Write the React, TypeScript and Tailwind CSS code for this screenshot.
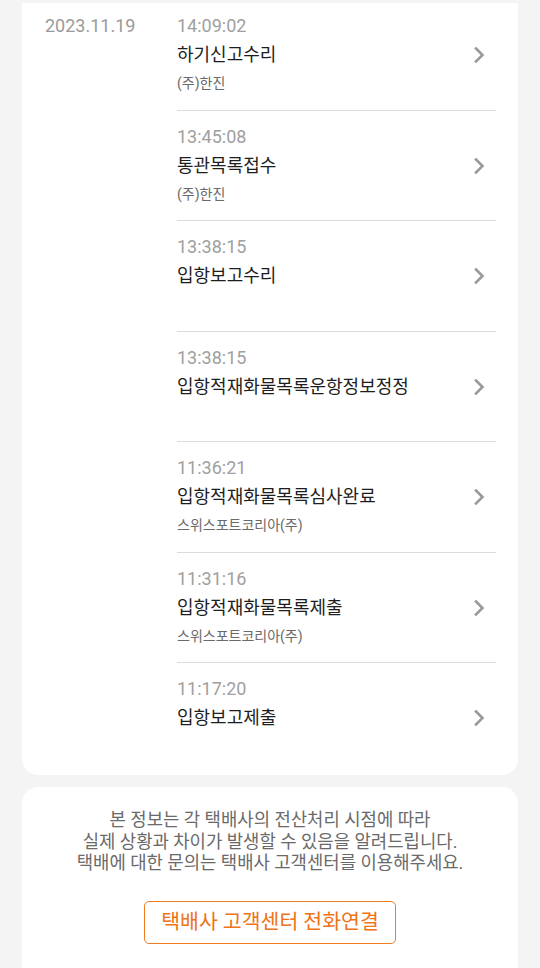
import React from "react";

const events = [
  { time: "14:09:02", title: "하기신고수리", sub: "(주)한진" },
  { time: "13:45:08", title: "통관목록접수", sub: "(주)한진" },
  { time: "13:38:15", title: "입항보고수리", sub: "" },
  { time: "13:38:15", title: "입항적재화물목록운항정보정정", sub: "" },
  { time: "11:36:21", title: "입항적재화물목록심사완료", sub: "스위스포트코리아(주)" },
  { time: "11:31:16", title: "입항적재화물목록제출", sub: "스위스포트코리아(주)" },
  { time: "11:17:20", title: "입항보고제출", sub: "" },
];

function Chevron() {
  return (
    <svg width="14" height="18" viewBox="0 0 14 18" fill="none">
      <path d="M4 2.5 L10.5 9 L4 15.5" stroke="#999999" strokeWidth="2.6" strokeLinecap="square" />
    </svg>
  );
}

export default function App() {
  return (
    <div
      className="h-[968px] overflow-hidden bg-[#f4f4f4] pt-[3px] px-[22px]"
      style={{ fontFamily: 'Roboto, "Noto Sans CJK KR", sans-serif' }}
    >
      {/* tracking card */}
      <div className="bg-white rounded-b-[16px] flex">
        <div className="w-[155px] shrink-0 pl-[23px] pt-[10px] text-[18px] leading-[26px] text-[#9a9a9a]">
          2023.11.19
        </div>
        <div className="flex-1 pr-[22px]">
          {events.map((ev, i) => {
            const first = i === 0;
            const last = i === events.length - 1;
            return (
              <div
                key={i}
                className={`flex items-start justify-between ${
                  first ? "h-[107.5px] pt-[10px]" : last ? "h-[112px] pt-[13px]" : "h-[110.5px] pt-[13px]"
                } ${last ? "" : "border-b border-[#dcdcdc]"}`}
              >
                <div className="flex flex-col">
                  <div className="text-[18px] leading-[26px] text-[#a0a0a0]">{ev.time}</div>
                  <div className="text-[18px] leading-[32px] text-[#1e1e1e]">{ev.title}</div>
                  <div className="text-[14px] leading-[24px] text-[#6a6a6a]">{ev.sub}</div>
                </div>
                <div className="mt-[33px] mr-[10px]">
                  <Chevron />
                </div>
              </div>
            );
          })}
        </div>
      </div>

      {/* notice card */}
      <div className="mt-[12px] bg-white rounded-t-[16px] h-[200px] flex flex-col items-center pt-[22px]">
        <p className="text-center text-[17.8px] leading-[21.5px] text-[#6a6a6a]">
          본 정보는 각 택배사의 전산처리 시점에 따라
          <br />
          실제 상황과 차이가 발생할 수 있음을 알려드립니다.
          <br />
          택배에 대한 문의는 택배사 고객센터를 이용해주세요.
        </p>
        <button className="mt-[27px] w-[252px] h-[43px] border-[1.5px] border-[#f07d22] rounded-[5px] text-[20.5px] text-[#f07318] flex items-center justify-center">
          택배사 고객센터 전화연결
        </button>
      </div>
    </div>
  );
}
